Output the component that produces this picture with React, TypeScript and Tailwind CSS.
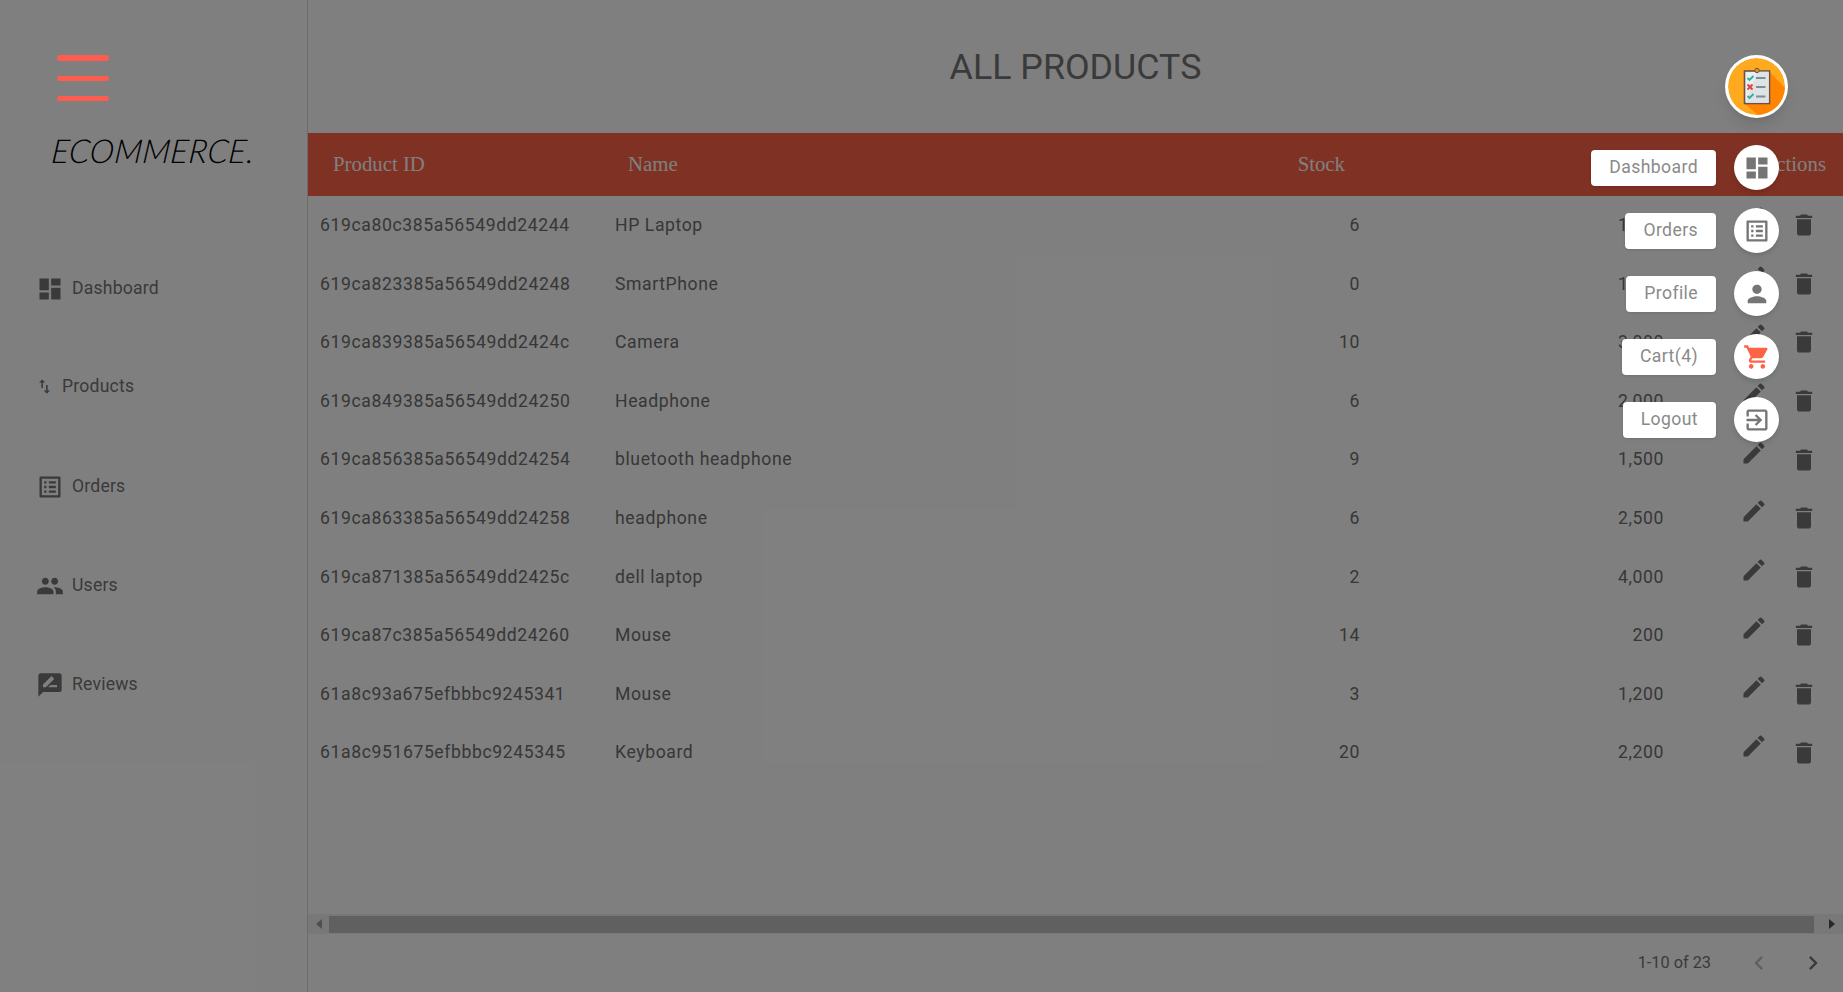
import { MdDashboard, MdDelete, MdEdit, MdExitToApp, MdImportExport, MdListAlt, MdPeople, MdPerson, MdRateReview, MdShoppingCart, MdChevronLeft, MdChevronRight } from 'react-icons/md'
import type { IconType } from 'react-icons'

const products = [
  { id: '619ca80c385a56549dd24244', name: 'HP Laptop', stock: 6, price: '1,000' },
  { id: '619ca823385a56549dd24248', name: 'SmartPhone', stock: 0, price: '1,000' },
  { id: '619ca839385a56549dd2424c', name: 'Camera', stock: 10, price: '3,000' },
  { id: '619ca849385a56549dd24250', name: 'Headphone', stock: 6, price: '2,000' },
  { id: '619ca856385a56549dd24254', name: 'bluetooth headphone', stock: 9, price: '1,500' },
  { id: '619ca863385a56549dd24258', name: 'headphone', stock: 6, price: '2,500' },
  { id: '619ca871385a56549dd2425c', name: 'dell laptop', stock: 2, price: '4,000' },
  { id: '619ca87c385a56549dd24260', name: 'Mouse', stock: 14, price: '200' },
  { id: '61a8c93a675efbbbc9245341', name: 'Mouse', stock: 3, price: '1,200' },
  { id: '61a8c951675efbbbc9245345', name: 'Keyboard', stock: 20, price: '2,200' },
]

const navItems: { label: string; icon: IconType }[] = [
  { label: 'Dashboard', icon: MdDashboard },
  { label: 'Products', icon: MdImportExport },
  { label: 'Orders', icon: MdListAlt },
  { label: 'Users', icon: MdPeople },
  { label: 'Reviews', icon: MdRateReview },
]

const dialItems: { label: string; icon: IconType; iconClass: string }[] = [
  { label: 'Dashboard', icon: MdDashboard, iconClass: 'text-[#757575]' },
  { label: 'Orders', icon: MdListAlt, iconClass: 'text-[#757575]' },
  { label: 'Profile', icon: MdPerson, iconClass: 'text-[#757575]' },
  { label: 'Cart(4)', icon: MdShoppingCart, iconClass: 'text-[#ff6347]' },
  { label: 'Logout', icon: MdExitToApp, iconClass: 'text-[#757575]' },
]

const gridCols = 'grid grid-cols-[295px_auto_100px_304px_168px]'

function ClipboardAvatar() {
  return (
    <svg viewBox="0 0 57 57" className="w-[57px] h-[57px] rounded-full">
      <circle cx="28.5" cy="28.5" r="28.5" fill="#ffa91f" />
      <path d="M41.5 14L57 30V45L42 57H30L16.5 45.5Z" fill="#ff8500" />
      <rect x="16.5" y="13" width="25" height="32.5" fill="#ecefef" stroke="#6d5048" strokeWidth="1.6" />
      <path d="M29 13.8H40.7V44.7H18Z" fill="#dfe3e3" />
      <circle cx="29" cy="12.5" r="2.2" fill="#ef8a1d" stroke="#6d5048" strokeWidth="1" />
      <path d="M19.5 20L21.5 22L25.5 18" stroke="#26b0a6" strokeWidth="1.9" fill="none" />
      <path d="M19.5 26.5L24.5 31.5M24.5 26.5L19.5 31.5" stroke="#e0403f" strokeWidth="1.9" fill="none" />
      <path d="M19.5 38L21.5 40L25.5 36" stroke="#26b0a6" strokeWidth="1.9" fill="none" />
      <path d="M28 20H37.5M28 29H37.5M28 38.5H37.5" stroke="#78909c" strokeWidth="1.9" />
    </svg>
  )
}

export default function App() {
  return (
    <div className="relative h-screen w-full overflow-hidden bg-white font-['Roboto',sans-serif] flex">
      <aside className="w-[308px] shrink-0 border-r border-[#d8d8d8] pt-[132px]">
        <div className="h-[36px] pl-[50px]">
          <span className="inline-block origin-bottom-left -skew-x-6 text-black font-['Lato',sans-serif] font-light italic text-[33px] leading-[36px] tracking-[0.3px] whitespace-nowrap">
            ECOMMERCE.
          </span>
        </div>
        <nav className="mt-[71px] flex flex-col">
          {navItems.map(({ label, icon: Icon }) => (
            <div key={label} className={label === 'Products' ? 'h-[99px] flex items-center gap-2 pl-[35px] pb-[2px] text-[#757575] text-[17.6px] tracking-[0.2px]' : 'h-[99px] flex items-center gap-2 pl-[36px] text-[#757575] text-[17.6px] tracking-[0.2px]'}>
              <Icon size={label === 'Products' ? 19 : 28} />
              <span>{label}</span>
            </div>
          ))}
        </nav>
      </aside>

      <main className="flex-1 min-w-0 flex flex-col">
        <h1 className="h-[133px] shrink-0 pt-[3px] flex items-center justify-center text-[35.8px] font-normal text-[#757575]">
          ALL PRODUCTS
        </h1>

        <div className={`${gridCols} h-[63px] shrink-0 items-center pb-[1px] bg-[#ff6347] text-white font-['Liberation_Serif',serif] text-[20.8px]`}>
          <div className="pl-[25px]">Product ID</div>
          <div className="pl-[25px]">Name</div>
          <div className="text-right pr-[26px]">Stock</div>
          <div className="text-right pr-[26px]">Price</div>
          <div className="text-right pr-[17px]">Actions</div>
        </div>

        <div className="shrink-0">
          {products.map((p) => (
            <div key={p.id} className={`${gridCols} h-[58.6px] items-center text-[17.6px] tracking-[0.6px] text-[#6e6e6e]`}>
              <div className="pl-[12px]">{p.id}</div>
              <div className="pl-[12px]">{p.name}</div>
              <div className="text-right pr-[11px]">{p.stock}</div>
              <div className="text-right pr-[11px]">{p.price}</div>
              <div className="flex items-center pl-[65px] gap-[22px] text-[#757575]">
                <MdEdit size={28} className="mb-[14px]" />
                <MdDelete size={28} />
              </div>
            </div>
          ))}
        </div>

        <div className="flex-1" />

        <div className="h-[20px] shrink-0 bg-[#f1f1f1] flex items-center">
          <div className="w-[21px] flex justify-center text-[#9e9e9e]">
            <svg viewBox="0 0 6 10" className="w-[6px] h-[10px]"><path d="M6 0V10L0 5Z" fill="currentColor" /></svg>
          </div>
          <div className="flex-1 h-[17px] mr-[9px] bg-[#c1c1c1]" />
          <div className="w-[18px] mr-[2px] flex justify-center text-[#505050]">
            <svg viewBox="0 0 6 10" className="w-[6px] h-[10px]"><path d="M0 0V10L6 5Z" fill="currentColor" /></svg>
          </div>
        </div>

        <div className="h-[58px] shrink-0 flex items-center justify-end text-[#757575]">
          <span className="text-[16.3px] mr-[34px]">1-10 of 23</span>
          <MdChevronLeft size={28} className="text-[#c0c0c0] mr-[26px]" />
          <MdChevronRight size={28} className="mr-[16px]" />
        </div>
      </main>

      <div className="absolute inset-0 bg-black/50" />

      <button className="absolute left-[57px] top-[55px] w-[52px] h-[46px] flex flex-col justify-between">
        <span className="block h-[6px] rounded-full bg-[#ff5c50]" />
        <span className="block h-[5px] rounded-full bg-[#ff5c50]" />
        <span className="block h-[5px] rounded-full bg-[#ff5c50]" />
      </button>

      <div className="absolute right-[55px] top-[55px] flex flex-col items-end">
        <div className="w-[63px] h-[63px] rounded-full bg-white flex items-center justify-center shadow-lg">
          <ClipboardAvatar />
        </div>
        <div className="mt-[27px] mr-[9px] flex flex-col gap-[18px]">
          {dialItems.map(({ label, icon: Icon, iconClass }) => (
            <div key={label} className="flex items-center justify-end gap-[18px]">
              <span className="h-[36px] px-[18px] rounded bg-white text-[#8a8a8a] text-[17.6px] tracking-[0.4px] flex items-center shadow">{label}</span>
              <span className="w-[45px] h-[45px] rounded-full bg-white flex items-center justify-center shadow-md">
                <Icon size={28} className={iconClass} />
              </span>
            </div>
          ))}
        </div>
      </div>
    </div>
  )
}
